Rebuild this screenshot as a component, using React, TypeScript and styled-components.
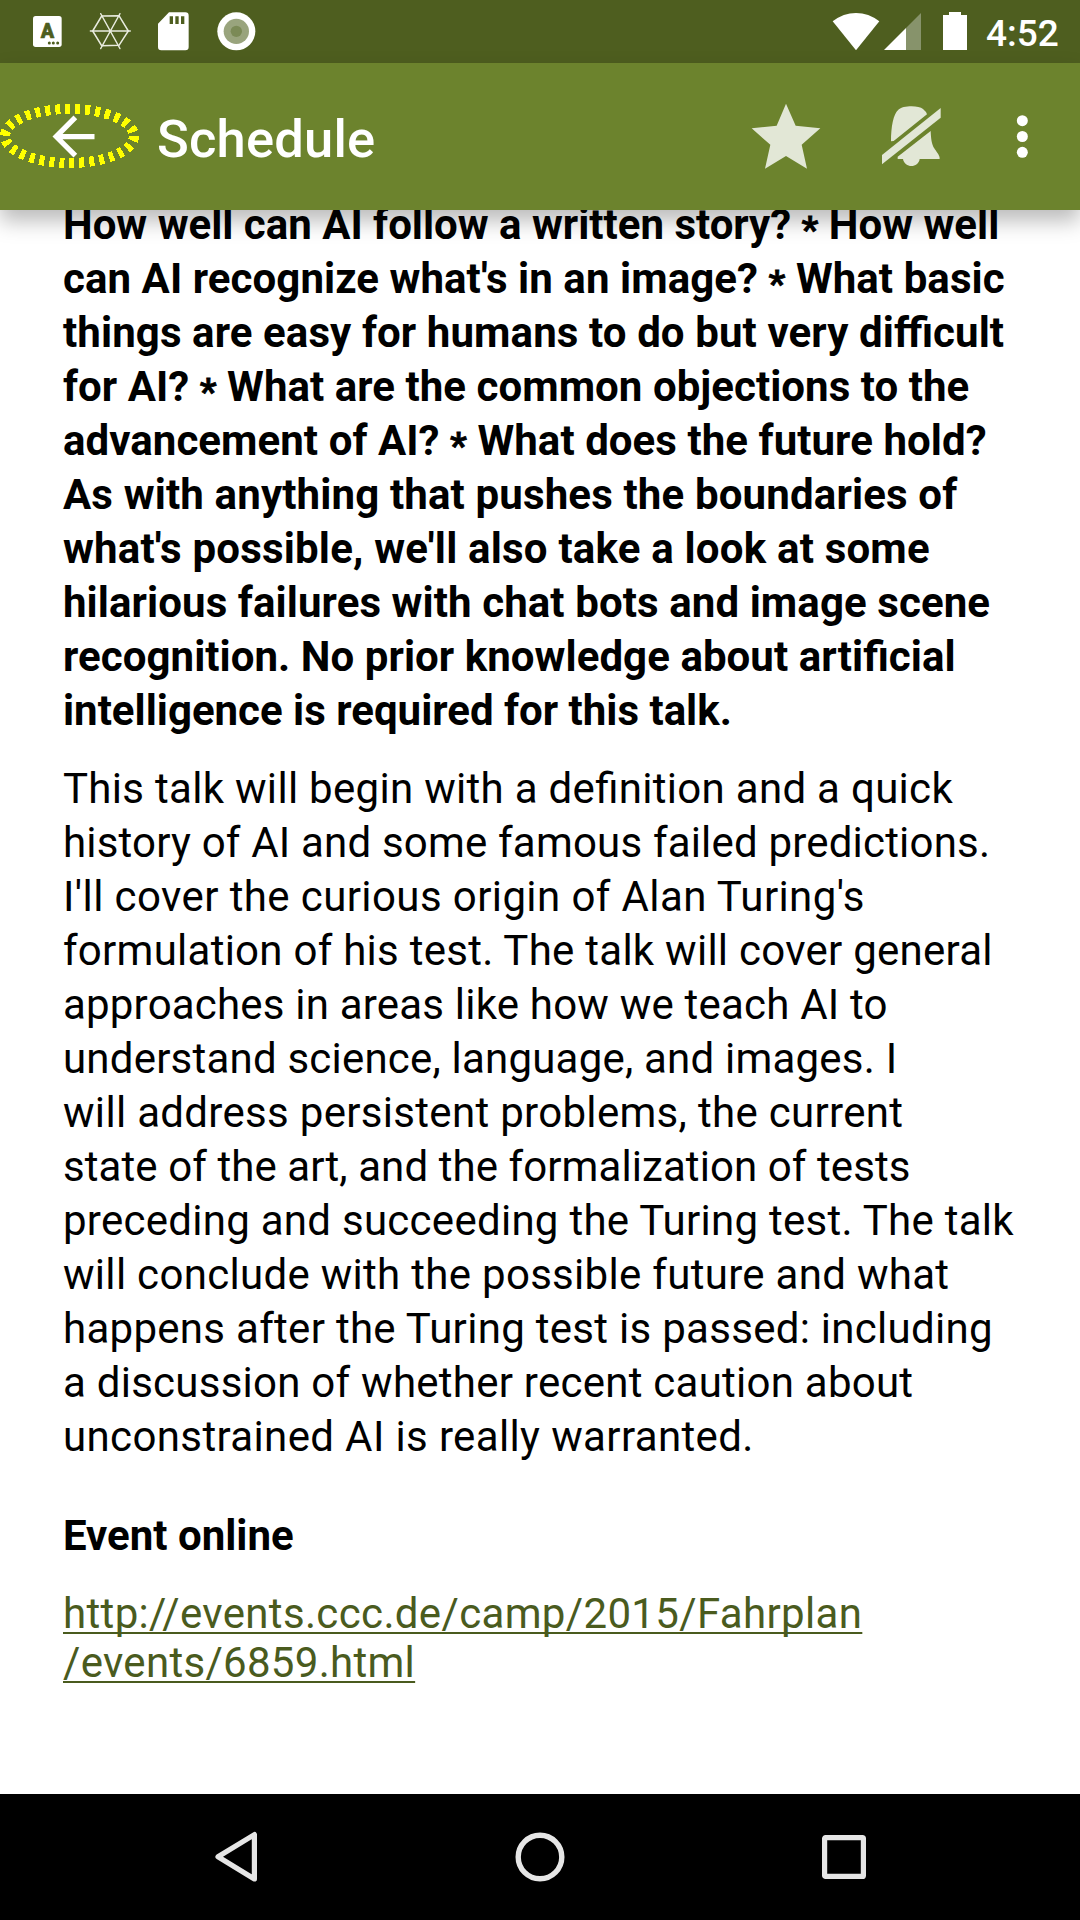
import React, { Fragment } from "react";
import styled, { createGlobalStyle } from "styled-components";

const GlobalStyle = createGlobalStyle`
  html, body { margin: 0; padding: 0; background: #fff; }
  body { font-family: Roboto, "Liberation Sans", sans-serif; overflow: hidden; }
  * { box-sizing: border-box; }
  svg { display: block; flex: none; }
`;

const Screen = styled.div`
  width: 1080px;
  height: 1920px;
  display: flex;
  flex-direction: column;
  background: #fff;
  overflow: hidden;
`;

const StatusBar = styled.header`
  flex: none;
  height: 63px;
  background: #4e5e1f;
  display: flex;
  justify-content: space-between;
`;

const StatusGroup = styled.div`
  display: flex;
  height: 63px;
`;

const Clock = styled.time`
  width: 113px;
  color: #fff;
  font-size: 37px;
  font-weight: 500;
  line-height: 43px;
  padding: 12px 0 0 19px;
  white-space: nowrap;
`;

const AppBar = styled.div`
  position: relative;
  z-index: 1;
  flex: none;
  height: 147px;
  background: #6c832d;
  box-shadow: 0 11px 20px rgba(0, 0, 0, 0.27);
  display: flex;
  align-items: center;
  padding-left: 42px;
`;

const Title = styled.h1`
  flex: 1;
  margin: 0;
  padding: 5px 0 0 52px;
  color: #fff;
  font-size: 52.5px;
  font-weight: 500;
  line-height: 62px;
  letter-spacing: 0.2px;
`;

const Highlight = styled.svg`
  position: absolute;
  left: 0;
  top: 40px;
`;

const Content = styled.main`
  flex: 1;
  min-height: 0;
  overflow: hidden;
  padding-left: 63px;
  color: #000;
  font-size: 42px;
`;

const Paragraph = styled.p<{ $bold?: boolean; $top: number }>`
  margin: ${(p) => p.$top}px 0 0;
  font-weight: ${(p) => (p.$bold ? 700 : 400)};
  line-height: 54px;
`;

const Line = styled.span<{ $spacing?: number }>`
  display: block;
  height: 54px;
  white-space: nowrap;
  letter-spacing: ${(p) => p.$spacing ?? 0}px;
  font-feature-settings: "liga" 1;
`;

const Asterisk = styled.span`
  font-size: 37px;
  line-height: 0;
  vertical-align: -3px;
  -webkit-text-stroke: 0.8px #000;
`;

const Link = styled.a`
  display: block;
  margin-top: 26px;
  line-height: 49px;
  color: #4a5b1e;
  text-decoration: none;
`;

const LinkLine = styled.span<{ $spacing?: number }>`
  display: table;
  height: 49px;
  white-space: nowrap;
  letter-spacing: ${(p) => p.$spacing ?? 0}px;
  text-decoration: underline;
  text-decoration-thickness: 2px;
  text-underline-offset: 4px;
  text-decoration-skip-ink: none;
`;

const NavBar = styled.nav`
  flex: none;
  height: 126px;
  background: #000;
  display: flex;
  justify-content: center;
`;

const NavButton = styled.button`
  width: 304px;
  height: 126px;
  padding: 0;
  border: 0;
  background: none;
  display: flex;
  align-items: center;
  justify-content: center;
`;

type LineData = [text: string, spacing: number];

const abstractLines: LineData[] = [
  ["How well can AI follow a written story? * How well", 0],
  ["can AI recognize what's in an image? * What basic", 0.07],
  ["things are easy for humans to do but very difficult", 0.1],
  ["for AI? * What are the common objections to the", 0.045],
  ["advancement of AI? * What does the future hold?", 0.06],
  ["As with anything that pushes the boundaries of", 0.15],
  ["what's possible, we'll also take a look at some", 0.2],
  ["hilarious failures with chat bots and image scene", 0.09],
  ["recognition. No prior knowledge about artificial", 0.055],
  ["intelligence is required for this talk.", 0],
];

const descriptionLines: LineData[] = [
  ["This talk will begin with a definition and a quick", 0.3],
  ["history of AI and some famous failed predictions.", 0.19],
  ["I'll cover the curious origin of Alan Turing's", 0.4],
  ["formulation of his test. The talk will cover general", 0.26],
  ["approaches in areas like how we teach AI to", 0.2],
  ["understand science, language, and images. I", 0.21],
  ["will address persistent problems, the current", 0.31],
  ["state of the art, and the formalization of tests", 0.08],
  ["preceding and succeeding the Turing test. The talk", 0.27],
  ["will conclude with the possible future and what", 0.3],
  ["happens after the Turing test is passed: including", 0.29],
  ["a discussion of whether recent caution about", 0.25],
  ["unconstrained AI is really warranted.", 0.37],
];

const TextLine = ({ text, spacing }: { text: string; spacing: number }) => (
  <Line $spacing={spacing}>
    {text.split("*").map((part, i) => (
      <Fragment key={i}>
        {i > 0 && <Asterisk>*</Asterisk>}
        {part}
      </Fragment>
    ))}
  </Line>
);

const NotificationIcons = () => (
  <svg width="280" height="63" viewBox="0 0 840 189">
    <rect x="99" y="48" width="86" height="93" rx="8" fill="#fff" />
    <text
      x="142"
      y="114"
      textAnchor="middle"
      fontSize="59"
      fontWeight="900"
      fill="#4e5e1f"
      stroke="#4e5e1f"
      strokeWidth="2"
      strokeLinejoin="round"
    >
      A
    </text>
    <g fill="#4e5e1f">
      <circle cx="148" cy="129" r="4.5" />
      <circle cx="160" cy="129" r="4.5" />
      <circle cx="173" cy="129" r="4.5" />
    </g>
    <g stroke="#e9ecdf" strokeWidth="4.6" fill="none" strokeLinecap="round">
      <path d="M305 48L357 47L385 93L357 136L305 137L278 93Z" />
      <path d="M302 41L360 146M360 41L302 146M271 93H391" strokeWidth="4" />
    </g>
    <path
      fill="#fff"
      fillRule="evenodd"
      d="M507 37H556Q566 37 566 47V141Q566 151 556 151H484Q474 151 474 141V71ZM509 49V72H519V49ZM526 49V72H536V49ZM543 49V72H553V49Z"
    />
    <circle cx="709" cy="94" r="57" fill="#fff" />
    <circle cx="709" cy="94" r="38" fill="#99a47d" />
    <circle cx="709" cy="94" r="17" fill="#7b8a56" />
  </svg>
);

const SystemIcons = () => (
  <svg width="157" height="63" viewBox="0 0 471 189">
    <path fill="#fff" d="M68 64Q100 39 138 39Q176 39 208 64L138 151Z" />
    <path fill="#87936b" d="M333 39V150H288V84Z" />
    <path fill="#fff" d="M222 150L288 84V150Z" />
    <path fill="#fff" d="M399 45H417V36H453V45H471V150H399Z" />
  </svg>
);

const BackArrow = () => (
  <svg width="63" height="63" viewBox="0 0 24 24" fill="#fff">
    <path d="M20 11H7.83l5.59-5.59L12 4l-8 8 8 8 1.41-1.41L7.83 13H20v-2z" />
  </svg>
);

const ActionIcons = () => (
  <svg width="380" height="147" viewBox="0 9 1140 441">
    <g fill="#e2e7d6">
      <path d="M258 131L287 197L361 205L305 254L321 326L258 288L195 326L211 254L155 205L230 197Z" />
      <path d="M573 244C573 200 580 162 595 149C608 136 656 135 669 147Q679 155 681 163L581 243Z" />
      <path d="M722 144V173L546 313V285Z" />
      <path d="M692 213C694 265 703 261 715 283Q720 292 719 297H659C655 325 614 325 609 297H593V290Z" />
    </g>
    <g fill="#fff">
      <circle cx="967" cy="182" r="16.5" />
      <circle cx="967" cy="229.5" r="16.5" />
      <circle cx="967" cy="277" r="16.5" />
    </g>
  </svg>
);

export default function App() {
  return (
    <Screen>
      <GlobalStyle />
      <StatusBar>
        <StatusGroup>
          <NotificationIcons />
        </StatusGroup>
        <StatusGroup>
          <SystemIcons />
          <Clock>4:52</Clock>
        </StatusGroup>
      </StatusBar>
      <AppBar>
        <BackArrow />
        <Title>Schedule</Title>
        <ActionIcons />
        <Highlight width="140" height="66" viewBox="0 0 140 66" shapeRendering="crispEdges">
          <ellipse cx="69.5" cy="33" rx="64.5" ry="27" fill="none" stroke="#ff0" strokeWidth="10" strokeDasharray="5 5" />
        </Highlight>
      </AppBar>
      <Content>
        <Paragraph $bold $top={-12}>
          {abstractLines.map(([text, spacing]) => (
            <TextLine key={text} text={text} spacing={spacing} />
          ))}
        </Paragraph>
        <Paragraph $top={24}>
          {descriptionLines.map(([text, spacing]) => (
            <TextLine key={text} text={text} spacing={spacing} />
          ))}
        </Paragraph>
        <Paragraph $bold $top={45}>
          <Line>Event online</Line>
        </Paragraph>
        <Link>
          <LinkLine $spacing={0.35}>http://events.ccc.de/camp/2015/Fahrplan</LinkLine>
          <LinkLine $spacing={0.3}>/events/6859.html</LinkLine>
        </Link>
      </Content>
      <NavBar>
        <NavButton aria-label="Back">
          <svg width="50" height="54" viewBox="0 0 50 54">
            <path d="M43.4 4.6V49L7 26.8Z" fill="none" stroke="#e6e6e6" strokeWidth="5.2" strokeLinejoin="round" />
          </svg>
        </NavButton>
        <NavButton aria-label="Home">
          <svg width="50" height="50" viewBox="0 0 50 50">
            <circle cx="25" cy="25" r="21.8" fill="none" stroke="#e6e6e6" strokeWidth="5.4" />
          </svg>
        </NavButton>
        <NavButton aria-label="Overview">
          <svg width="44" height="44" viewBox="0 0 44 44">
            <rect x="2.6" y="2.6" width="38.8" height="38.8" rx="1" fill="none" stroke="#e6e6e6" strokeWidth="5.2" />
          </svg>
        </NavButton>
      </NavBar>
    </Screen>
  );
}
